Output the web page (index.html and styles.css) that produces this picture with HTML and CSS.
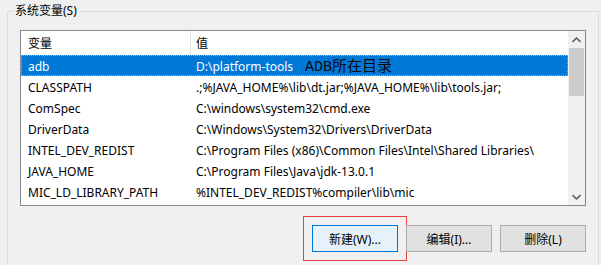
FILE: index.html
```html
<!DOCTYPE html>
<html lang="zh-CN">

<head>
    <meta charset="UTF-8">
    <meta name="viewport" content="width=device-width, initial-scale=1.0">
    <title>系统变量</title>
    <link rel="stylesheet" href="styles.css">
</head>

<body>
<fieldset class="group">
  <legend>系统变量(S)</legend>

  <div class="listbox">
    <div class="list">
      <div class="row head"><span>变量</span><span class="val">值</span></div>
      <div class="row sel"><span>adb</span><span class="val">D:\platform-tools<span class="note">ADB所在目录</span></span></div>
      <div class="row"><span>CLASSPATH</span><span class="val">.;%JAVA_HOME%\lib\dt.jar;%JAVA_HOME%\lib\tools.jar;</span></div>
      <div class="row"><span>ComSpec</span><span class="val">C:\windows\system32\cmd.exe</span></div>
      <div class="row"><span>DriverData</span><span class="val">C:\Windows\System32\Drivers\DriverData</span></div>
      <div class="row"><span>INTEL_DEV_REDIST</span><span class="val">C:\Program Files (x86)\Common Files\Intel\Shared Libraries\</span></div>
      <div class="row"><span>JAVA_HOME</span><span class="val">C:\Program Files\Java\jdk-13.0.1</span></div>
      <div class="row"><span>MIC_LD_LIBRARY_PATH</span><span class="val">%INTEL_DEV_REDIST%compiler\lib\mic</span></div>
    </div>
    <div class="scrollbar">
      <div class="arrow">
        <svg width="9" height="6" viewBox="0 0 9 6"><path d="M0.5 5 L4.5 1 L8.5 5" fill="none" stroke="#606060" stroke-width="1.6"/></svg>
      </div>
      <div class="thumb"></div>
      <div class="track"></div>
      <div class="arrow">
        <svg width="9" height="6" viewBox="0 0 9 6"><path d="M0.5 1 L4.5 5 L8.5 1" fill="none" stroke="#606060" stroke-width="1.6"/></svg>
      </div>
    </div>
  </div>

  <div class="buttons">
    <button type="button" class="btn default">新建(W)...</button>
    <button type="button" class="btn">编辑(I)...</button>
    <button type="button" class="btn">删除(L)</button>
  </div>
</fieldset>
</body>
</html>
```

FILE: styles.css
```css
body {
    font-family: "Noto Sans", "Noto Sans CJK SC", sans-serif;
    font-size: 12px;
    background-color: #f0f0f0;
    color: #000;
    margin: 0;
    padding: 0;
    overflow: hidden;
}

.group {
    margin: 0 2px 0 7px;
    padding: 0 12px;
    border: 1px solid #dcdcdc;
    min-width: 0;
    height: 300px;
}

.group legend {
    margin-left: -7px;
    padding: 0 2px;
    line-height: 22px;
    color: #000;
}

.listbox {
    margin-top: 8px;
    display: flex;
    height: 174px;
    border: 1px solid #828790;
    background-color: #fff;
}

.list {
    flex: 1;
    overflow: hidden;
}

.row {
    display: grid;
    grid-template-columns: 169px 1fr;
    height: 21px;
    line-height: 23px;
    white-space: nowrap;
}

.row span {
    padding-left: 7px;
    overflow: hidden;
}

.row .val {
    padding-left: 5px;
    border-left: 1px solid transparent;
}

.row.head {
    height: 24px;
    line-height: 25px;
}

.row.head .val {
    border-left-color: #e5e5e5;
}

.row.sel {
    background-color: #0078d7;
    color: #fff;
    outline: 1px dotted #f0a050;
    outline-offset: -1px;
}

.note {
    font-family: "Liberation Mono", "Noto Sans CJK SC", monospace;
    font-size: 15px;
    color: #0a0a0a;
    padding-left: 12px !important;
}

.scrollbar {
    width: 17px;
    display: flex;
    flex-direction: column;
    background-color: #f0f0f0;
}

.arrow {
    height: 17px;
    display: flex;
    align-items: center;
    justify-content: center;
}

.thumb {
    height: 48px;
    margin: 0 1px;
    background-color: #cdcdcd;
}

.track {
    flex: 1;
}

.buttons {
    display: flex;
    justify-content: flex-end;
    gap: 8px;
    margin-top: 19px;
}

.btn {
    width: 86px;
    height: 27px;
    padding: 0;
    font-family: inherit;
    font-size: 12px;
    color: #000;
    background-color: #e1e1e1;
    border: 1px solid #adadad;
}

.btn.default {
    background-color: #e5f1fb;
    border-color: #0078d7;
    outline: 1px solid #e84040;
    outline-offset: 8px;
}
```
